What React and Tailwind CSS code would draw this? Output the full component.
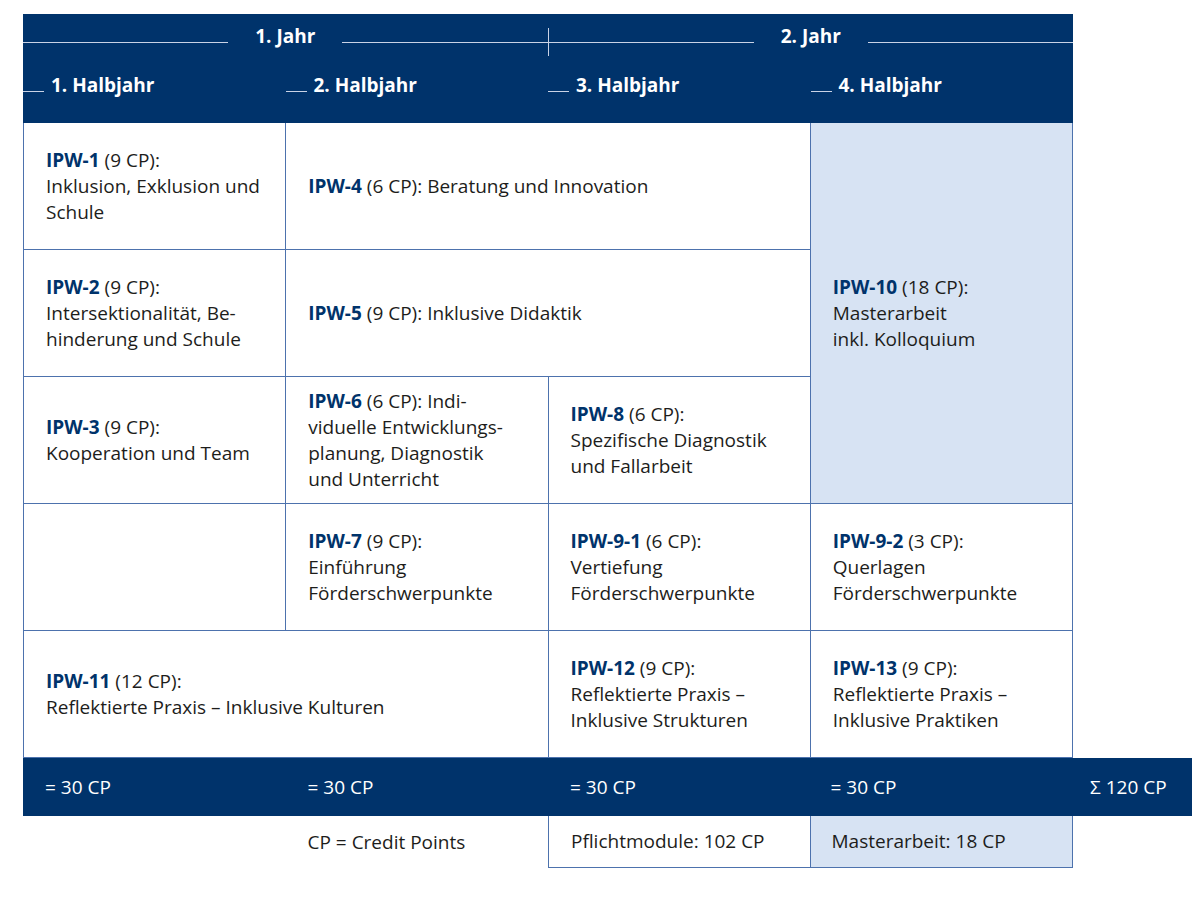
const NAVY = "bg-[#00336b]";

function Module({ code, cp, lines }) {
  return (
    <div className="text-[19px] leading-[26px] text-[#1d1d1b]">
      <span className="font-bold text-[#00336b]">{code}</span> ({cp}):
      {lines.map((l, i) =>
        i === 0 && l.inline ? (
          <span key={i}> {l.text}</span>
        ) : (
          <div key={i}>{l.text ?? l}</div>
        )
      )}
    </div>
  );
}

function Cell({ children, className = "" }) {
  return (
    <div className={`flex items-center border-r border-b border-[#4d72ad] pl-[22px] pr-2 ${className}`}>
      {children}
    </div>
  );
}

function YearHalf({ label }) {
  return (
    <div className="flex flex-1 items-center">
      <div className="h-px flex-1 bg-[#c9d3e6]" />
      <span className="px-[27px] pb-[12px] text-[19px] font-bold text-white">{label}</span>
      <div className="h-px flex-1 bg-[#c9d3e6]" />
    </div>
  );
}

function Semester({ label }) {
  return (
    <div className="flex items-end self-start pt-[2px]">
      <div className="mb-[6px] h-px w-[21px] bg-[#c9d3e6]" />
      <span className="ml-[7px] text-[19px] leading-[26px] font-bold text-white">{label}</span>
    </div>
  );
}

export default function App() {
  return (
    <div
      className="min-h-[901px] bg-white pt-[14px] pl-[23px]"
      style={{ fontFamily: '"Open Sans", "Liberation Sans", sans-serif' }}
    >
      <header className={`${NAVY} w-[1050px] h-[109px] flex flex-col`}>
        <div className="flex h-[56px] items-center">
          <YearHalf label="1. Jahr" />
          <div className="h-[28px] w-px bg-[#c9d3e6]" />
          <YearHalf label="2. Jahr" />
        </div>
        <div className="grid grid-cols-4 h-[53px]">
          <Semester label="1. Halbjahr" />
          <Semester label="2. Halbjahr" />
          <Semester label="3. Halbjahr" />
          <Semester label="4. Halbjahr" />
        </div>
      </header>

      <div className="grid w-[1050px] grid-cols-4 grid-rows-[127px_127px_127px_127px_127px] border-l border-[#4d72ad]">
        <Cell>
          <Module code="IPW-1" cp="9 CP" lines={["Inklusion, Exklusion und", "Schule"]} />
        </Cell>
        <Cell className="col-span-2">
          <Module code="IPW-4" cp="6 CP" lines={[{ inline: true, text: "Beratung und Innovation" }]} />
        </Cell>
        <Cell className="row-span-3 bg-[#d7e3f3]">
          <Module code="IPW-10" cp="18 CP" lines={["Masterarbeit", "inkl. Kolloquium"]} />
        </Cell>

        <Cell>
          <Module code="IPW-2" cp="9 CP" lines={["Intersektionalität, Be-", "hinderung und Schule"]} />
        </Cell>
        <Cell className="col-span-2">
          <Module code="IPW-5" cp="9 CP" lines={[{ inline: true, text: "Inklusive Didaktik" }]} />
        </Cell>

        <Cell>
          <Module code="IPW-3" cp="9 CP" lines={["Kooperation und Team"]} />
        </Cell>
        <Cell>
          <Module
            code="IPW-6"
            cp="6 CP"
            lines={[{ inline: true, text: "Indi-" }, "viduelle Entwicklungs-", "planung, Diagnostik", "und Unterricht"]}
          />
        </Cell>
        <Cell>
          <Module code="IPW-8" cp="6 CP" lines={["Spezifische Diagnostik", "und Fallarbeit"]} />
        </Cell>

        <Cell />
        <Cell>
          <Module code="IPW-7" cp="9 CP" lines={["Einführung", "Förderschwerpunkte"]} />
        </Cell>
        <Cell>
          <Module code="IPW-9-1" cp="6 CP" lines={["Vertiefung", "Förderschwerpunkte"]} />
        </Cell>
        <Cell>
          <Module code="IPW-9-2" cp="3 CP" lines={["Querlagen", "Förderschwerpunkte"]} />
        </Cell>

        <Cell className="col-span-2">
          <Module code="IPW-11" cp="12 CP" lines={["Reflektierte Praxis – Inklusive Kulturen"]} />
        </Cell>
        <Cell>
          <Module code="IPW-12" cp="9 CP" lines={["Reflektierte Praxis –", "Inklusive Strukturen"]} />
        </Cell>
        <Cell>
          <Module code="IPW-13" cp="9 CP" lines={["Reflektierte Praxis –", "Inklusive Praktiken"]} />
        </Cell>
      </div>

      <div className={`${NAVY} grid h-[58px] w-[1169px] grid-cols-[262.5px_262.5px_262.5px_262.5px_1fr] items-center text-[19px] text-white`}>
        <span className="pl-[22px]">= 30 CP</span>
        <span className="pl-[22px]">= 30 CP</span>
        <span className="pl-[22px]">= 30 CP</span>
        <span className="pl-[20px]">= 30 CP</span>
        <span className="pl-[17px]">Σ 120 CP</span>
      </div>

      <div className="grid h-[52px] w-[1050px] grid-cols-4 text-[19px] text-[#1d1d1b]">
        <div />
        <div className="flex items-center pl-[22px]">CP = Credit Points</div>
        <div className="flex items-center border-x border-b border-[#4d72ad] pl-[22px]">Pflichtmodule: 102 CP</div>
        <div className="flex items-center border-r border-b border-[#4d72ad] bg-[#d7e3f3] pl-[21px]">Masterarbeit: 18 CP</div>
      </div>
    </div>
  );
}
